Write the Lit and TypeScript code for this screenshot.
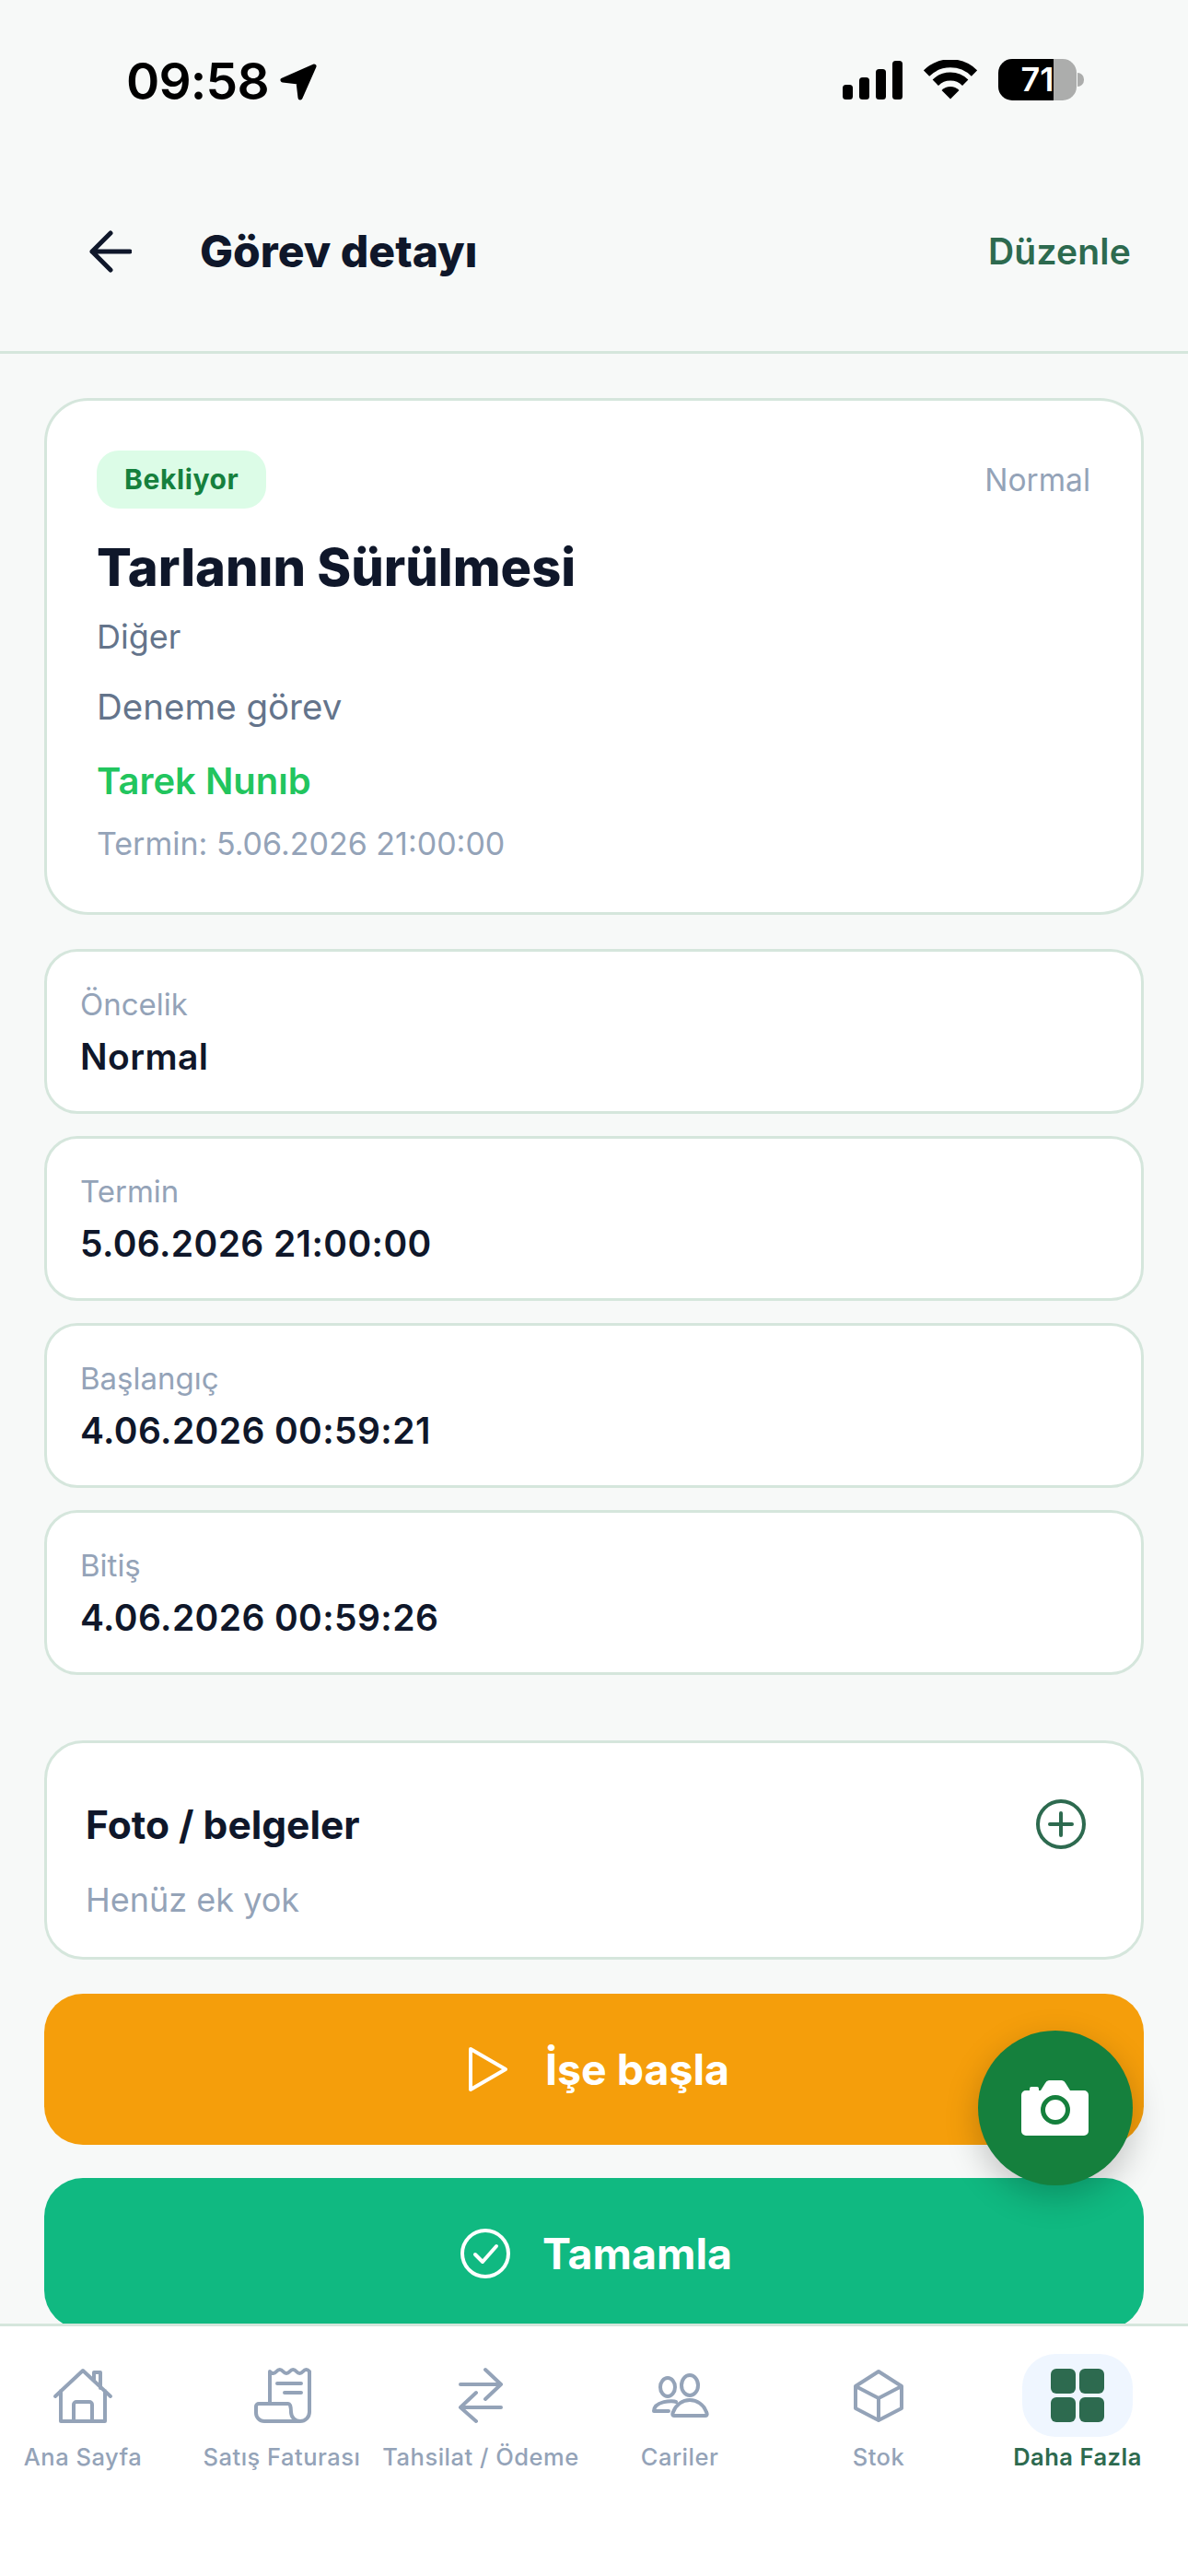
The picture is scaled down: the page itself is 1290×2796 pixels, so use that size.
import { LitElement, html, css, svg } from 'lit';
import { customElement } from 'lit/decorators.js';

const tabIcons = {
  home: svg`<path d="M6 37 36 9l30 28M12 31v33h48V31M26 64V46a3 3 0 0 1 3-3h14a3 3 0 0 1 3 3v18M48 20v-9h7v17"/>`,
  receipt: svg`<path d="M23 45V10q3.600 4 7.200 0t7.200 0 7.200 0 7.200 0 7.200 0 7 0v44a10 10 0 0 1-20 0q0-9-3-9H11a3 3 0 0 0-3 3v7a9 9 0 0 0 9 9h39M31 23h26M39 33h18"/>`,
  swap: svg`<path d="M14 24h44M41 8l17 16-17 16M58 49H14M31 33 14 49l17 15"/>`,
  users: svg`<ellipse cx="47" cy="25" rx="9" ry="11"/><ellipse cx="23" cy="27" rx="8" ry="10"/><path d="M30 58c-2 0-2-2-1-4 3-8 10-13 18-13s15 5 18 13c1 2 1 4-1 4zM32 43c-3-2-24-1-24 10h16"/>`,
  box: svg`<path d="M36 10 61 26v24L36 63 11 50V26zM11 26l25 13 25-13M36 39v24"/>`,
};

const tabs = [
  { label: 'Ana Sayfa', icon: tabIcons.home },
  { label: 'Satış Faturası', icon: tabIcons.receipt },
  { label: 'Tahsilat / Ödeme', icon: tabIcons.swap },
  { label: 'Cariler', icon: tabIcons.users },
  { label: 'Stok', icon: tabIcons.box },
];

const infoRows = [
  { label: 'Öncelik', value: 'Normal' },
  { label: 'Termin', value: '5.06.2026 21:00:00' },
  { label: 'Başlangıç', value: '4.06.2026 00:59:21' },
  { label: 'Bitiş', value: '4.06.2026 00:59:26' },
];

@customElement('app-root')
export class AppRoot extends LitElement {
  static styles = css`
    :host {
      display: block;
      font-family: Inter, 'Liberation Sans', sans-serif;
      color: #0f172a;
    }

    .screen {
      position: relative;
      display: flex;
      flex-direction: column;
      height: 2796px;
      background: #f7f9f8;
      overflow: hidden;
    }

    .status {
      flex: none;
      display: flex;
      justify-content: space-between;
      height: 176px;
      padding: 60px 113px 0 137px;
      box-sizing: border-box;
      color: #000;
    }

    .status-left {
      display: flex;
      align-items: flex-start;
      gap: 11px;
    }

    .time {
      font-size: 55px;
      font-weight: 600;
      line-height: 56px;
      letter-spacing: -0.8px;
    }

    .location {
      margin-top: 8px;
    }

    .status-right {
      display: flex;
      align-items: flex-start;
      gap: 23px;
    }

    .signal {
      margin-top: 6px;
    }

    .wifi {
      margin-top: 5px;
    }

    .battery-wrap {
      display: flex;
      align-items: center;
      gap: 1px;
      margin-top: 4px;
    }

    .battery {
      width: 85px;
      height: 45px;
      border-radius: 15px;
      background: linear-gradient(to right, #000 60px, #acadac 60px);
      color: #fff;
      font-size: 36px;
      font-weight: 600;
      line-height: 45px;
      text-align: center;
    }

    .nub {
      width: 7px;
      height: 15px;
      border-radius: 0 8px 8px 0;
      background: #acadac;
    }

    .header {
      flex: none;
      display: flex;
      align-items: center;
      height: 193px;
      padding: 0 62px 12px 97px;
      border-bottom: 3px solid #d5e6dc;
    }

    .back {
      display: block;
      margin-right: 74px;
    }

    .header h1 {
      flex: 1;
      margin: 0;
      font-size: 48px;
      font-weight: 800;
    }

    .edit {
      color: #2d6a4f;
      font-size: 39px;
      font-weight: 600;
      letter-spacing: 0.2px;
    }

    .content {
      flex: 1;
      min-height: 0;
      overflow: hidden;
      padding: 48px 48px 0;
    }

    .card {
      box-sizing: border-box;
      background: #fff;
      border: 3px solid #d5e6dc;
    }

    .summary {
      height: 561px;
      padding: 54px 55px 0 54px;
      border-radius: 48px;
    }

    .summary-top {
      display: flex;
      justify-content: space-between;
      align-items: center;
      margin-bottom: 28px;
    }

    .badge {
      padding: 0 30px;
      height: 63px;
      line-height: 63px;
      border-radius: 24px;
      background: #dcfce7;
      color: #15803d;
      font-size: 30px;
      font-weight: 700;
      letter-spacing: 0.6px;
    }

    .priority {
      color: #94a3b8;
      font-size: 33.500px;
    }

    .summary h2 {
      margin: 0 0 17px;
      font-size: 56px;
      font-weight: 800;
      line-height: 72px;
    }

    .kind {
      margin: 0 0 32px;
      color: #64748b;
      font-size: 36px;
      line-height: 44px;
    }

    .description {
      margin: 0 0 35px;
      color: #64748b;
      font-size: 38.500px;
      line-height: 44px;
    }

    .assignee {
      margin: 0 0 23px;
      color: #22c55e;
      font-size: 40px;
      font-weight: 600;
      line-height: 48px;
    }

    .due {
      margin: 0;
      color: #94a3b8;
      font-size: 34px;
      line-height: 42px;
    }

    .info-list {
      display: flex;
      flex-direction: column;
      gap: 24px;
      margin-top: 37px;
    }

    .info {
      height: 179px;
      padding: 36px 36px 0;
      border-radius: 36px;
    }

    .info-label {
      color: #94a3b8;
      font-size: 33px;
      line-height: 42px;
    }

    .info-value {
      margin-top: 12px;
      font-size: 39px;
      font-weight: 600;
      line-height: 48px;
      letter-spacing: 0.4px;
    }

    .attachments {
      height: 238px;
      margin-top: 71px;
      padding: 61px 60px 0 42px;
      border-radius: 42px;
    }

    .attachments-top {
      display: flex;
      justify-content: space-between;
      align-items: center;
      margin-bottom: 33px;
    }

    .attachments-title {
      font-size: 42.500px;
      font-weight: 700;
    }

    .attachments-empty {
      color: #94a3b8;
      font-size: 36px;
      line-height: 44px;
    }

    .action {
      display: flex;
      justify-content: center;
      align-items: center;
      gap: 40px;
      height: 164px;
      margin-top: 36px;
      border-radius: 42px;
      color: #fff;
      font-size: 46.500px;
      font-weight: 700;
    }

    .start {
      margin-top: 37px;
      padding-left: 10px;
      background: #f59e0b;
    }

    .finish {
      gap: 35px;
      padding-left: 5px;
      background: #10b981;
    }

    .fab {
      position: absolute;
      top: 2204px;
      right: 60px;
      display: flex;
      justify-content: center;
      align-items: center;
      width: 168px;
      height: 168px;
      border-radius: 50%;
      background: #15803d;
      box-shadow: 0 12px 36px rgba(0, 0, 0, 0.22);
    }

    .tabbar {
      flex: none;
      display: grid;
      grid-template-columns: repeat(6, 216px);
      height: 271px;
      margin-left: -18px;
      background: #fff;
      border-top: 3px solid #d5e6dc;
    }

    .tab {
      display: flex;
      flex-direction: column;
      align-items: center;
      padding-top: 30px;
      color: #94a3b8;
      font-size: 25.500px;
      font-weight: 500;
      letter-spacing: 0.5px;
      white-space: nowrap;
    }

    .tab-icon {
      display: flex;
      justify-content: center;
      align-items: center;
      width: 120px;
      height: 90px;
      margin-bottom: 6px;
      border-radius: 36px;
    }

    .tab-icon svg {
      fill: none;
      stroke: #94a3b8;
      stroke-width: 4;
      stroke-linecap: round;
      stroke-linejoin: round;
    }

    .tab.active {
      color: #2d6a4f;
      font-weight: 600;
    }

    .tab.active .tab-icon {
      background: #eff6ff;
    }

    .tab.active .tab-icon svg {
      fill: #2d6a4f;
      stroke: none;
    }
  `;

  renderStatus() {
    return html`
      <div class="status">
        <div class="status-left">
          <span class="time">09:58</span>
          <svg class="location" width="42" height="42" viewBox="0 0 42 42">
            <path d="M38 4 4 19l17 2 2 17z" fill="#000" stroke="#000" stroke-width="5" stroke-linejoin="round" />
          </svg>
        </div>
        <div class="status-right">
          <svg class="signal" width="65" height="42" viewBox="0 0 65 42">
            <rect x="0" y="26" width="11" height="16" rx="3.500" />
            <rect x="18" y="18" width="11" height="24" rx="3.500" />
            <rect x="36" y="9" width="11" height="33" rx="3.500" />
            <rect x="54" y="0" width="11" height="42" rx="3.500" />
          </svg>
          <svg class="wifi" width="58" height="43" viewBox="0 0 58 43">
            <path d="M3 14.500a37 37 0 0 1 52 0" fill="none" stroke="#000" stroke-width="9" />
            <path d="M12.800 24.700a23 23 0 0 1 32.400 0" fill="none" stroke="#000" stroke-width="9" />
            <path d="M19.500 33a13.500 13.500 0 0 1 19 0L29 42.500z" />
          </svg>
          <div class="battery-wrap">
            <div class="battery">71</div>
            <div class="nub"></div>
          </div>
        </div>
      </div>
    `;
  }

  renderTabs() {
    return html`
      <nav class="tabbar">
        ${tabs.map(tab => html`
          <div class="tab">
            <div class="tab-icon">
              <svg width="72" height="72" viewBox="0 0 72 72">${tab.icon}</svg>
            </div>
            ${tab.label}
          </div>
        `)}
        <div class="tab active">
          <div class="tab-icon">
            <svg width="72" height="72" viewBox="0 0 72 72">
              <rect x="7" y="7" width="27" height="27" rx="6" />
              <rect x="38" y="7" width="27" height="27" rx="6" />
              <rect x="7" y="38" width="27" height="27" rx="6" />
              <rect x="38" y="38" width="27" height="27" rx="6" />
            </svg>
          </div>
          Daha Fazla
        </div>
      </nav>
    `;
  }

  render() {
    return html`
      <div class="screen">
        ${this.renderStatus()}
        <header class="header">
          <svg class="back" width="46" height="46" viewBox="0 0 46 46" fill="none" stroke="#0f172a" stroke-width="5" stroke-linecap="round" stroke-linejoin="round">
            <path d="M44 23H3M23 3 3 23l20 20" />
          </svg>
          <h1>Görev detayı</h1>
          <span class="edit">Düzenle</span>
        </header>

        <main class="content">
          <section class="card summary">
            <div class="summary-top">
              <span class="badge">Bekliyor</span>
              <span class="priority">Normal</span>
            </div>
            <h2>Tarlanın Sürülmesi</h2>
            <p class="kind">Diğer</p>
            <p class="description">Deneme görev</p>
            <p class="assignee">Tarek Nunıb</p>
            <p class="due">Termin: 5.06.2026 21:00:00</p>
          </section>

          <div class="info-list">
            ${infoRows.map(row => html`
              <div class="card info">
                <div class="info-label">${row.label}</div>
                <div class="info-value">${row.value}</div>
              </div>
            `)}
          </div>

          <section class="card attachments">
            <div class="attachments-top">
              <span class="attachments-title">Foto / belgeler</span>
              <svg width="54" height="54" viewBox="0 0 54 54" fill="none" stroke="#2d6a4f" stroke-width="4" stroke-linecap="round">
                <circle cx="27" cy="27" r="25" />
                <path d="M27 15v24M15 27h24" />
              </svg>
            </div>
            <div class="attachments-empty">Henüz ek yok</div>
          </section>

          <div class="action start">
            <svg width="44" height="50" viewBox="0 0 44 50" fill="none" stroke="#fff" stroke-width="4" stroke-linejoin="round">
              <path d="M3 3 41 25 3 47z" />
            </svg>
            İşe başla
          </div>
          <div class="action finish">
            <svg width="54" height="54" viewBox="0 0 54 54" fill="none" stroke="#fff" stroke-width="4" stroke-linecap="round" stroke-linejoin="round">
              <circle cx="27" cy="27" r="25" />
              <path d="M16 28l8 8 15-17" />
            </svg>
            Tamamla
          </div>
        </main>

        <div class="fab">
          <svg width="74" height="60" viewBox="0 0 74 60">
            <path fill="#fff" d="M5 11h4V9a2 2 0 0 1 2-2h6a2 2 0 0 1 2 2v2h2l5-8a5 5 0 0 1 4-3h14a5 5 0 0 1 4 3l5 8h15a5 5 0 0 1 5 5v39a5 5 0 0 1-5 5H5a5 5 0 0 1-5-5V16a5 5 0 0 1 5-5z" />
            <circle cx="37" cy="32" r="13.500" fill="#fff" stroke="#15803d" stroke-width="5" />
          </svg>
        </div>

        ${this.renderTabs()}
      </div>
    `;
  }
}
